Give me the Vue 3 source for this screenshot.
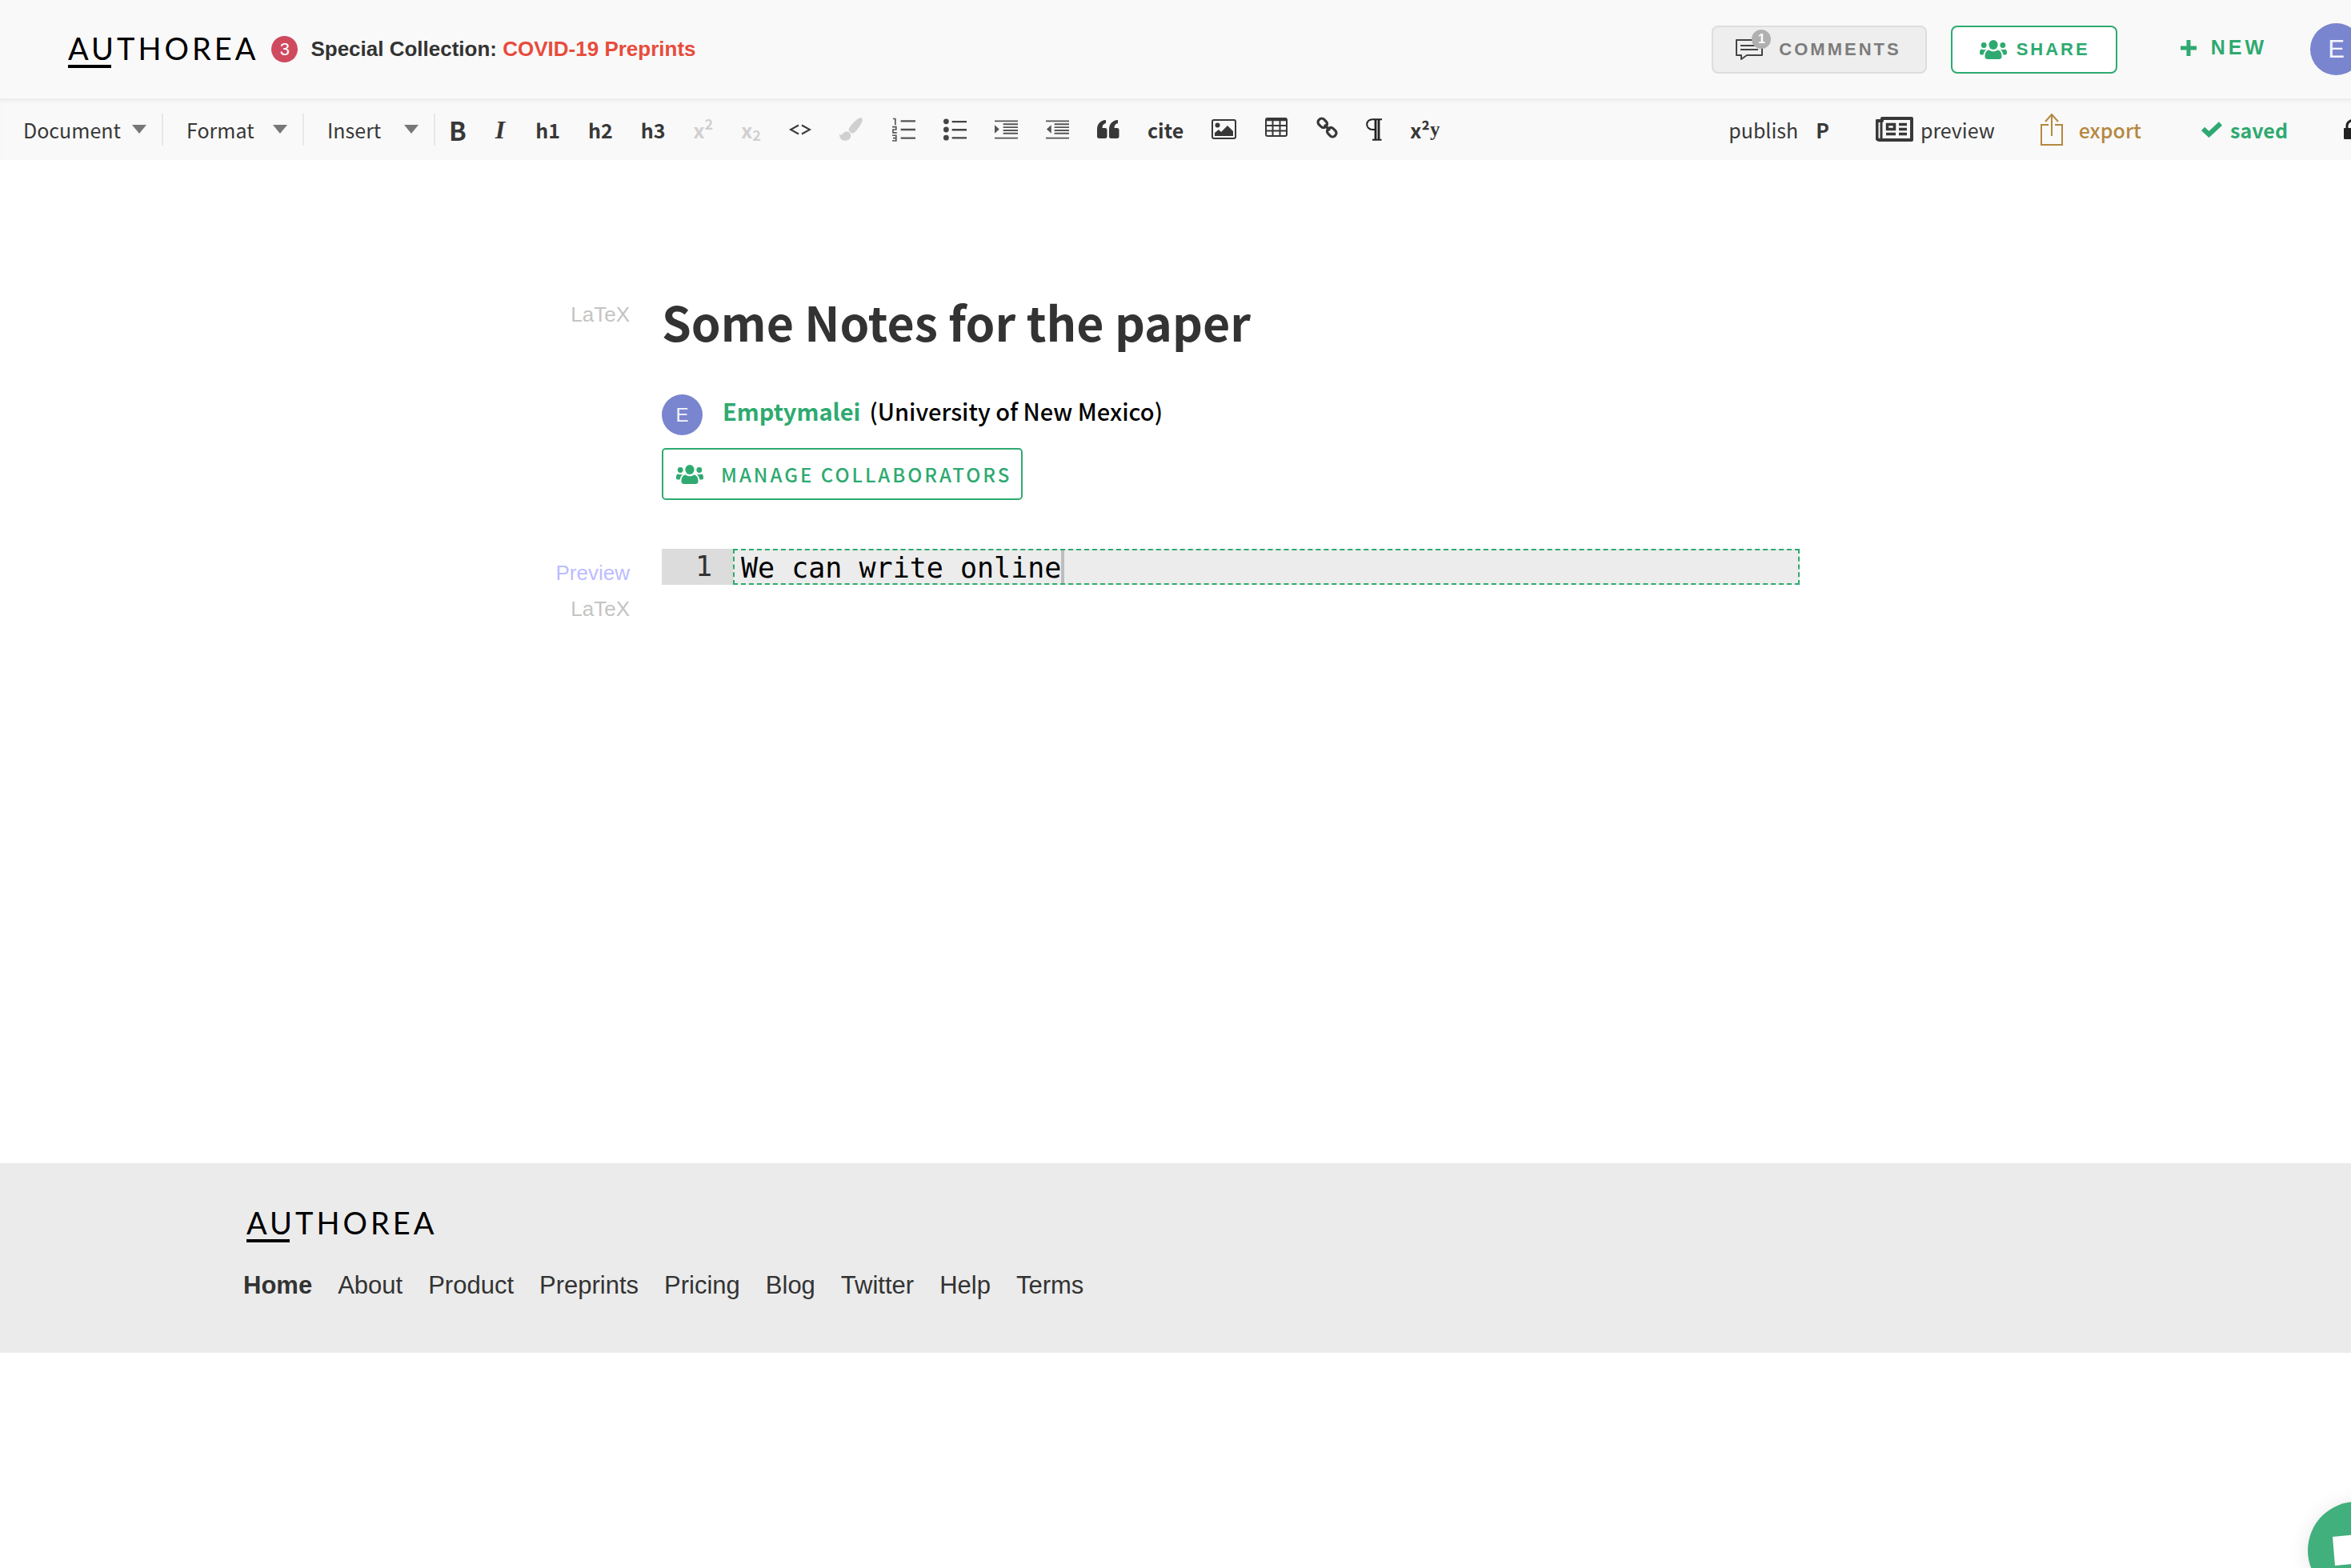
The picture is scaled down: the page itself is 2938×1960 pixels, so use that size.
<script setup>
import { ref } from 'vue'

const line = ref('We can write online')
const menus = [
  { label: 'Document', size: 'wide' },
  { label: 'Format', size: 'medium' },
  { label: 'Insert', size: 'small' },
]
const links = ['About', 'Product', 'Preprints', 'Pricing', 'Blog', 'Twitter', 'Help', 'Terms']
</script>

<template>
  <div class="page">
    <svg class="defs" aria-hidden="true">
      <symbol id="icon-group" viewBox="0 0 34 24">
        <ellipse cx="17" cy="6" rx="5.6" ry="6" />
        <circle cx="5.2" cy="6.5" r="3.4" />
        <circle cx="28.8" cy="6.5" r="3.4" />
        <path d="M11.5 12.5c1.6 1.2 3.4 1.8 5.500 1.800s3.900-.6 5.500-1.800c3.500.6 5 4 5 8.500 0 2-1.500 3-3.500 3h-14c-2 0-3.500-1-3.500-3 0-4.500 1.500-7.900 5-8.500z" />
        <path d="M2 11.500c2 1 4.500 1 6.500 0-2.200 1.800-3.500 4.300-3.900 7H2c-1.400 0-2-.8-2-2 0-2.500.4-4.300 2-5zM32 11.500c-2 1-4.500 1-6.500 0 2.200 1.800 3.500 4.300 3.900 7H32c1.400 0 2-.8 2-2 0-2.500-.4-4.300-2-5z" />
      </symbol>
    </svg>

    <header class="header">
      <a class="logo" href="#">AUTHOREA</a>
      <span class="count">3</span>
      <p class="promo">Special Collection: <a href="#">COVID-19 Preprints</a></p>
      <div class="actions">
        <button class="btn comments" type="button">
          <span class="bubble">
            <svg width="34" height="26" viewBox="0 0 34 26" fill="none" stroke="#444" stroke-width="2">
              <path d="M1 1h32v19H14l-7 5v-5H1z" stroke-linejoin="round" />
              <path d="M6 8h22M6 13h22" />
            </svg>
            <span class="dot">1</span>
          </span>
          COMMENTS
        </button>
        <button class="btn share" type="button">
          <svg class="group" width="34" height="24"><use href="#icon-group" /></svg>
          SHARE
        </button>
        <button class="new" type="button">
          <svg width="22" height="22" viewBox="0 0 22 22"><path d="M11 1v20M1 11h20" stroke="currentColor" stroke-width="5" /></svg>
          NEW
        </button>
        <button class="avatar big" type="button">E</button>
      </div>
    </header>

    <nav class="toolbar">
      <button v-for="m in menus" :key="m.label" class="menu" :class="m.size" type="button" aria-haspopup="menu">
        {{ m.label }}
        <svg width="18" height="11" viewBox="0 0 18 11"><path d="M0 0h18L9 11z" fill="#777" /></svg>
      </button>
      <div class="tools">
        <button type="button" class="glyph strong">B</button>
        <button type="button" class="glyph slant">I</button>
        <button type="button" class="bold">h1</button>
        <button type="button" class="bold">h2</button>
        <button type="button" class="bold">h3</button>
        <button type="button" class="bold off" disabled>x<sup>2</sup></button>
        <button type="button" class="bold off" disabled>x<sub>2</sub></button>
        <button type="button" aria-label="Code">
          <svg width="28" height="14" viewBox="0 0 28 14" fill="none" stroke="currentColor" stroke-width="2"><path d="M12 1.500L2 7l10 5.500M16 1.500L26 7l-10 5.500" /></svg>
        </button>
        <button type="button" class="brush off" disabled aria-label="Clear formatting">
          <svg width="29" height="29" viewBox="0 0 29 29" fill="currentColor">
            <path d="M25 .5c2-1 4.500.5 3.800 3C27.500 8 23 14.500 19 18.500c-1.500 1.300-3.300 1.500-4.700.4-1.500-1.200-2.500-2.800-2.800-4.300C14 9.500 20 3 25 .5z" />
            <path d="M9.800 17.500c2.500.2 4.500 2.400 4.500 5 0 3.500-2.800 6.300-7 6.300C2.500 28.800 0 26 0 20.500c1.500 1.500 2.500 1.600 3.400.6 1.200-1.900 3-3.800 6.400-3.600z" />
          </svg>
        </button>
        <button type="button" aria-label="Numbered list">
          <svg width="29" height="30" viewBox="0 0 30 30" fill="none" stroke="#555" stroke-width="2">
            <path d="M11 4h19M11 15h19M11 26h19" stroke-width="2.500" />
            <path d="M1 1h3v8M0 11.500h5V15H1v4h5M0 22.500h5v7H0M1 26h4" stroke-width="1.700" />
          </svg>
        </button>
        <button type="button" aria-label="Bulleted list">
          <svg width="29" height="28" viewBox="0 0 30 28" fill="#444">
            <circle cx="3.500" cy="3.500" r="3.500" /><circle cx="3.500" cy="14" r="3.500" /><circle cx="3.500" cy="24.500" r="3.500" />
            <path d="M11 2.500h19v2.500H11zM11 13h19v2.500H11zM11 23.500h19v2.500H11z" />
          </svg>
        </button>
        <button type="button" aria-label="Indent">
          <svg width="29" height="24" viewBox="0 0 30 24" fill="#555">
            <path d="M0 0h30v2H0zM11 4h19v2H11zM11 8h19v2H11zM11 12h19v2H11zM11 16h19v2H11zM0 22h30v2H0zM0 6l6 5.500L0 17z" />
          </svg>
        </button>
        <button type="button" aria-label="Outdent">
          <svg width="29" height="24" viewBox="0 0 30 24" fill="#555">
            <path d="M0 0h30v2H0zM11 4h19v2H11zM11 8h19v2H11zM11 12h19v2H11zM11 16h19v2H11zM0 22h30v2H0zM7 6l-6 5.500L7 17z" />
          </svg>
        </button>
        <button type="button" aria-label="Quote">
          <svg width="28" height="23" viewBox="0 0 28 23" fill="currentColor">
            <path d="M11 0v4C8 4.500 6.500 6.500 6.500 10H10c1.700 0 2.500 1 2.500 2.500v8c0 1.500-.8 2.500-2.500 2.500H2.500C.8 23 0 22 0 20.500V12C0 5 4 .5 11 0zM26 0v4c-3 .5-4.500 2.500-4.500 6H25c1.700 0 2.500 1 2.500 2.500v8c0 1.500-.8 2.500-2.500 2.500h-7.500c-1.700 0-2.500-1-2.500-2.500V12C15 5 19 .5 26 0z" />
          </svg>
        </button>
        <button type="button" class="bold">cite</button>
        <button type="button" aria-label="Image">
          <svg width="31" height="25" viewBox="0 0 31 25">
            <rect x="1" y="1" width="29" height="23" rx="2" fill="none" stroke="currentColor" stroke-width="2" />
            <circle cx="7.500" cy="7.500" r="3" fill="currentColor" />
            <path d="M4 21v-4l5-4 3 3 8-8 7 7v6z" fill="currentColor" />
          </svg>
        </button>
        <button type="button" class="raised" aria-label="Table">
          <svg width="28" height="24" viewBox="0 0 28 24" fill="none" stroke="currentColor" stroke-width="2">
            <rect x="1" y="1" width="26" height="22" rx="2" />
            <path d="M1 2.500h26" stroke-width="3.500" /><path d="M9.500 3v20M18.500 3v20M1 10h26M1 16.500h26" />
          </svg>
        </button>
        <button type="button" class="link" aria-label="Link">
          <svg width="27" height="27" viewBox="0 0 27 27" fill="none" stroke="currentColor" stroke-width="3.200">
            <rect x="-6" y="-4.500" width="12" height="9" rx="4" transform="translate(7.800 7.800) rotate(45)" />
            <rect x="-6" y="-4.500" width="12" height="9" rx="4" transform="translate(19.200 19.200) rotate(45)" />
            <path d="M10 10l7 7" />
          </svg>
        </button>
        <button type="button" aria-label="Paragraph marks">
          <svg width="20" height="28" viewBox="0 0 20 28" fill="none" stroke="#222" stroke-width="2">
            <path d="M20 1.200H8C4 1.200 1.200 4 1.200 7.500S4 14 8 14h3M8 26.800h11.500" />
            <path d="M12 1v25M16 1v25" stroke-width="2.800" />
          </svg>
        </button>
        <button type="button" class="bold">x²<span class="serif">y</span></button>
      </div>
      <div class="status">
        <button type="button" class="publish">publish <b>P</b></button>
        <button type="button" class="preview">
          <svg width="47" height="31" viewBox="0 0 47 31" fill="none" stroke="currentColor">
            <path d="M8 2h37v27H5c-2 0-3.500-1-3.500-3V5H8z" stroke-width="4" stroke-linejoin="round" /><path d="M7 5v22" stroke-width="3" />
            <rect x="14.500" y="9.500" width="9" height="6" stroke-width="3.500" />
            <path d="M29 9.500h10M29 15.500h10M13 21.500h12M29 21.500h10" stroke-width="3.500" />
          </svg>
          preview
        </button>
        <button type="button" class="export">
          <svg width="28" height="40" viewBox="0 0 28 40" fill="none" stroke="currentColor" stroke-width="2">
            <path d="M10 14H1v25h26V14h-9M14 28V2M6 10l8-9 8 9" />
          </svg>
          export
        </button>
        <button type="button" class="saved">
          <svg width="26" height="20" viewBox="0 0 26 20" fill="none" stroke="currentColor" stroke-width="6"><path d="M2 9l7.500 7L24 2.500" /></svg>
          saved
        </button>
        <button type="button" class="lock" aria-label="Lock">
          <svg width="28" height="25" viewBox="0 0 28 25"><path d="M4 12V8c0-9 18-9 18 0v4" fill="none" stroke="#222" stroke-width="3" /><rect y="11" width="28" height="14" rx="1" fill="#222" /></svg>
        </button>
      </div>
    </nav>

    <main class="article">
      <div class="row title-row">
        <span class="side">LaTeX</span>
        <h1>Some Notes for the paper</h1>
      </div>
      <div class="authors">
        <div class="author">
          <span class="avatar">E</span>
          <a href="#">Emptymalei</a>
          <span class="org">(University of New Mexico)</span>
        </div>
        <button class="btn manage" type="button">
          <svg class="group" width="34" height="24"><use href="#icon-group" /></svg>
          MANAGE COLLABORATORS
        </button>
      </div>
      <div class="row">
        <div class="side modes"><a class="mode-preview" href="#">Preview</a><span>LaTeX</span></div>
        <div class="editor">
          <span class="gutter">1</span>
          <div class="code">
            <input v-model="line" type="text" aria-label="LaTeX source" spellcheck="false" />
            <span class="caret"></span>
          </div>
        </div>
      </div>
    </main>

    <footer class="footer">
      <a class="logo" href="#">AUTHOREA</a>
      <nav class="links">
        <a class="home" href="#">Home</a>
        <a v-for="l in links" :key="l" href="#">{{ l }}</a>
      </nav>
    </footer>

    <button class="chat" type="button" aria-label="Chat">
      <svg width="122" height="122" viewBox="0 0 122 122"><path d="M31 44l52-5 3 36-52 5z" fill="#fff" /></svg>
    </button>
  </div>
</template>

<style>
body {
  margin: 0;
  background: #fff;
}
</style>

<style scoped>
.page {
  min-height: 100vh;
  overflow: hidden;
  color: #333;
  font-family: "Noto Sans CJK SC", "Open Sans", sans-serif;
}
.defs {
  position: absolute;
  width: 0;
  height: 0;
}
svg {
  display: block;
  flex: none;
}
a {
  color: inherit;
  text-decoration: none;
}
button {
  display: flex;
  flex: none;
  align-items: center;
  margin: 0;
  padding: 0;
  border: 0;
  background: none;
  color: inherit;
  font: inherit;
  white-space: nowrap;
}
.header {
  box-sizing: border-box;
  display: flex;
  align-items: center;
  height: 123px;
  padding-left: 85px;
  background: #f9f9f9;
  font-family: "Liberation Sans", Arial, sans-serif;
}
.logo {
  display: inline-block;
  color: #000;
  font: 400 38px/42px Lato, sans-serif;
  letter-spacing: 4px;
}
.logo::after {
  display: block;
  width: 54px;
  height: 4px;
  background: #000;
  content: "";
}
.count {
  width: 33px;
  margin: 0 16px;
  border-radius: 50%;
  background: #cf4a5e;
  color: #fff;
  font-size: 22px;
  line-height: 33px;
  text-align: center;
}
.promo {
  margin: 0;
  font-size: 26px;
  font-weight: 700;
}
.promo a {
  color: #e74c3c;
}
.actions {
  display: flex;
  align-items: center;
  margin: 0 -14px 0 auto;
}
.btn {
  box-sizing: border-box;
  border: 2px solid #2eaa70;
  border-radius: 8px;
  background: #fff;
  color: #2eaa70;
  font-size: 22px;
  font-weight: 700;
  letter-spacing: 3px;
}
.group {
  fill: currentColor;
}
.comments {
  height: 60px;
  margin-right: 30px;
  padding: 0 30px 0 28px;
  gap: 20px;
  border-color: #ddd;
  background: #eee;
  color: #7c7c7c;
}
.bubble {
  position: relative;
}
.dot {
  position: absolute;
  top: -12px;
  right: -10px;
  width: 24px;
  border-radius: 50%;
  background: #b0b0b0;
  color: #fff;
  font-size: 16px;
  line-height: 24px;
  letter-spacing: 0;
  text-align: center;
}
.share {
  height: 60px;
  padding: 0 32px 0 34px;
  gap: 12px;
}
.new {
  margin: 0 54px 4px 78px;
  gap: 17px;
  color: #2eaa70;
  font-size: 25px;
  font-weight: 700;
  letter-spacing: 4px;
}
.avatar {
  justify-content: center;
  width: 51px;
  height: 51px;
  border-radius: 50%;
  background: #7985cf;
  color: #f4f4fc;
  font: 400 24px/51px "Liberation Sans", Arial, sans-serif;
  text-align: center;
}
.big {
  width: 65px;
  height: 65px;
  font-size: 31px;
}
.toolbar {
  display: flex;
  align-items: center;
  height: 77px;
  background: #f9f9f9;
  box-shadow: inset 0 6px 6px -4px #e8e8e8;
  color: #383838;
  font-size: 25px;
  line-height: 40px;
}
.menu {
  box-sizing: border-box;
  justify-content: space-between;
  height: 40px;
  padding: 0 19px 0 29px;
  border-right: 2px solid #e8e8e8;
}
.wide {
  width: 204px;
}
.medium {
  width: 176px;
}
.small {
  width: 164px;
}
.tools {
  display: flex;
  align-items: center;
  margin-left: 17px;
  gap: 35px;
}
.bold,
.strong {
  font-weight: 700;
}
.glyph {
  font-size: 32px;
}
.slant {
  padding: 0 3px 0 1px;
  font-family: "Liberation Serif", serif;
  font-style: italic;
  font-weight: 700;
}
.serif {
  font-family: "Liberation Serif", serif;
}
.off {
  color: #d0d0d0;
}
.brush {
  padding-right: 2px;
}
sup,
sub {
  font-size: 18px;
  line-height: 18px;
}
sup {
  padding-bottom: 16px;
}
sub {
  padding-top: 12px;
}
.raised {
  padding: 0 1px 6px;
}
.link {
  padding-bottom: 4px;
}
.status {
  display: flex;
  align-items: center;
  margin: 0 -19px 0 auto;
}
.publish {
  gap: 22px;
}
.preview {
  margin-left: 58px;
  gap: 9px;
}
.export {
  margin-left: 57px;
  gap: 20px;
  color: #b5883e;
  font-weight: 500;
}
.saved {
  margin-left: 75px;
  gap: 10px;
  color: #2eaa70;
  font-weight: 700;
}
.lock {
  margin-left: 70px;
}
.article {
  box-sizing: border-box;
  min-height: 64vh;
  padding: 159px 689px 0;
}
.row {
  display: flex;
}
.side {
  flex: none;
  width: 98px;
  margin-right: 40px;
  color: #c4c4c4;
  font: 26px/45px "Liberation Sans", Arial, sans-serif;
  text-align: right;
}
.title-row .side {
  margin-top: 12px;
}
h1 {
  margin: 0;
  font-size: 59px;
  line-height: 86px;
}
.authors {
  display: flex;
  flex-direction: column;
  align-items: flex-start;
  margin: 48px 0 61px 138px;
}
.author {
  display: flex;
  color: #000;
  font-size: 29px;
  font-weight: 500;
  line-height: 40px;
}
.author a {
  margin: 0 11px 0 25px;
  color: #2eaa70;
  font-weight: 700;
}
.manage {
  height: 65px;
  margin-top: 16px;
  padding: 0 12px 0 16px;
  gap: 22px;
  border-radius: 5px;
  font-size: 24px;
  font-weight: 500;
}
.modes {
  display: flex;
  flex-direction: column;
  margin-top: 8px;
}
.mode-preview {
  color: #bcbcff;
}
.editor {
  display: flex;
  flex: 1;
  height: 45px;
  font: 35px/45px "DejaVu Sans Mono", monospace;
}
.gutter {
  box-sizing: border-box;
  width: 89px;
  padding-right: 26px;
  background: #dcdcdc;
  text-align: right;
}
.code {
  box-sizing: border-box;
  display: flex;
  flex: 1;
  padding-left: 8px;
  border: 2px dashed #2eaa70;
  background: #ececec;
}
.code input {
  width: 19ch;
  padding: 3px 0 0;
  border: 0;
  outline: 0;
  background: none;
  color: #000;
  font: inherit;
}
.caret {
  width: 4px;
  background: #bdbdbd;
}
.footer {
  box-sizing: border-box;
  min-height: 237px;
  padding: 53px 304px 0;
  background: #ebebeb;
}
.footer .logo {
  margin-left: 4px;
}
.links {
  display: flex;
  margin-top: 34px;
  gap: 32px;
  font: 31px/40px "Liberation Sans", Arial, sans-serif;
}
.home {
  font-weight: 700;
}
.chat {
  position: fixed;
  right: -68px;
  bottom: -39px;
  border-radius: 50%;
  background: #42b07c;
  box-shadow: 0 2px 24px #0000001a;
}
</style>
